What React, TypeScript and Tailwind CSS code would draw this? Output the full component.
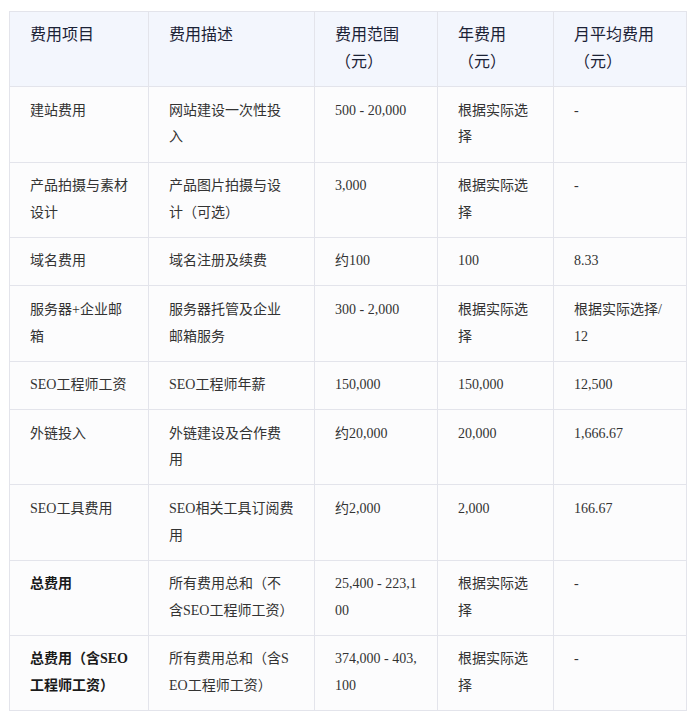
const columns = [
  { label: '费用项目', width: 'w-[139px]' },
  { label: '费用描述', width: 'w-[166px]' },
  { label: '费用范围（元）', width: 'w-[123px]' },
  { label: '年费用（元）', width: 'w-[116px]' },
  { label: '月平均费用（元）', width: 'w-[133px]' },
];

const rows: { cells: string[]; bold?: boolean }[] = [
  { cells: ['建站费用', '网站建设一次性投入', '500 - 20,000', '根据实际选择', '-'] },
  { cells: ['产品拍摄与素材设计', '产品图片拍摄与设计（可选）', '3,000', '根据实际选择', '-'] },
  { cells: ['域名费用', '域名注册及续费', '约100', '100', '8.33'] },
  { cells: ['服务器+企业邮箱', '服务器托管及企业邮箱服务', '300 - 2,000', '根据实际选择', '根据实际选择/12'] },
  { cells: ['SEO工程师工资', 'SEO工程师年薪', '150,000', '150,000', '12,500'] },
  { cells: ['外链投入', '外链建设及合作费用', '约20,000', '20,000', '1,666.67'] },
  { cells: ['SEO工具费用', 'SEO相关工具订阅费用', '约2,000', '2,000', '166.67'] },
  { cells: ['总费用', '所有费用总和（不含SEO工程师工资）', '25,400 - 223,100', '根据实际选择', '-'], bold: true },
  { cells: ['总费用（含SEO工程师工资）', '所有费用总和（含SEO工程师工资）', '374,000 - 403,100', '根据实际选择', '-'], bold: true },
];

export default function App() {
  return (
    <div
      className="min-h-screen bg-white pt-[11px] pl-[9px]"
      style={{ fontFamily: '"Liberation Serif", "Noto Sans CJK SC", serif' }}
    >
      <table className="table-fixed border-collapse w-[677px] break-all">
        <colgroup>
          {columns.map((c) => (
            <col key={c.label} className={c.width} />
          ))}
        </colgroup>
        <thead>
          <tr className="bg-[#f3f6fd]">
            {columns.map((c) => (
              <th
                key={c.label}
                className="border border-[#e3e4eb] px-5 py-[10.4px] text-left align-top text-[16px] leading-[26.75px] font-normal text-[#1b2236]"
              >
                {c.label}
              </th>
            ))}
          </tr>
        </thead>
        <tbody>
          {rows.map((row) => (
            <tr key={row.cells[0]} className="bg-[#fcfcfd]">
              {row.cells.map((cell, i) => (
                <td
                  key={i}
                  className={`border border-[#e3e4eb] px-5 py-[10.4px] align-top text-[14px] leading-[26.75px] ${
                    row.bold && i === 0 ? 'font-bold text-[#1a1a1a]' : 'text-[#333333]'
                  }`}
                >
                  {cell}
                </td>
              ))}
            </tr>
          ))}
        </tbody>
      </table>
    </div>
  );
}
